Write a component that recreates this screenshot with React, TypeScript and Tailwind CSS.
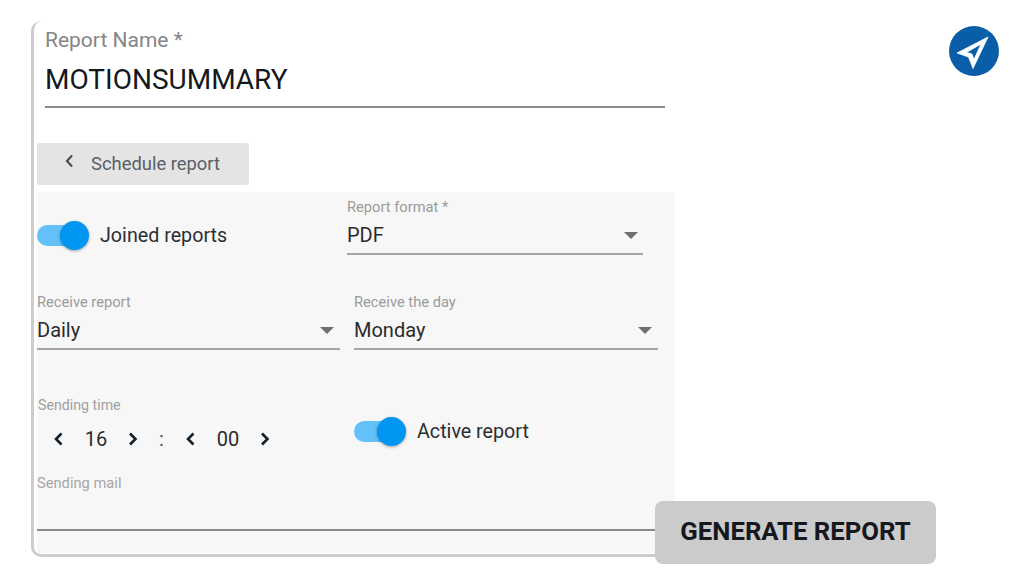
const font = "font-['Roboto',sans-serif]";

function Toggle() {
  return (
    <div className="relative h-[30px] w-[52px] shrink-0">
      <div className="absolute left-0 top-[4px] h-[21px] w-[46px] rounded-full bg-[#63c0f9]" />
      <div className="absolute left-[23px] top-0 h-[29px] w-[29px] rounded-full bg-[#0096f2] shadow-[0_1px_3px_rgba(0,0,0,0.35)]" />
    </div>
  );
}

function Select({ label, value, className, rowClass }: { label: string; value: string; className: string; rowClass: string }) {
  return (
    <div className={className}>
      <div className="text-[14.7px] leading-[17px] text-[#9b9b9b]">{label}</div>
      <div className={`flex h-[39px] items-center justify-between border-b-2 border-[#a6a6a6] ${rowClass}`}>
        <span className="text-[20px] leading-[24px] text-[#2b2b2b]">{value}</span>
        <span className="mt-[1px] h-0 w-0 border-x-[7px] border-t-[7px] border-x-transparent border-t-[#6f6f6f]" />
      </div>
    </div>
  );
}

function Chevron({ dir }: { dir: "left" | "right" }) {
  return (
    <svg width="12" height="16" viewBox="0 0 12 16" fill="none" stroke="#10202c" strokeWidth="2.6" className="shrink-0">
      <path d={dir === "left" ? "M9.5 2.5 4 8l5.5 5.5" : "M3 2.5 8.5 8 3 13.5"} />
    </svg>
  );
}

export default function App() {
  return (
    <div className={`${font} relative flex h-[576px] w-[1024px] items-start overflow-hidden bg-white`}>
      <div className="ml-[31px] mt-[21px] h-[536px] w-[644px] rounded-l-[10px] border-b-[3px] border-l-[3px] border-[#cdcdcd]">
        <div className="ml-[11px] mr-[10px] mt-[5px] border-b-2 border-[#8a8a8a] pb-[9px]">
          <div className="text-[21px] leading-[28px] text-[#868686]">Report Name *</div>
          <div className="mt-[9px] text-[28px] leading-[34px] text-[#15181c]">MOTIONSUMMARY</div>
        </div>
        <button className="ml-[3px] mt-[35px] flex h-[42px] w-[212px] items-center rounded-[2px] bg-[#e4e4e4] text-[#5a6068]">
          <svg width="12" height="16" viewBox="0 0 12 16" fill="none" stroke="#4a5058" strokeWidth="2.2" className="mb-[6px] ml-[26px]">
            <path d="M9 2.5 4 8l5 5.5" />
          </svg>
          <span className="ml-[16px] text-[18.4px] leading-[24px]">Schedule report</span>
        </button>
        <div className="ml-[3px] mt-[7px] h-[361px] bg-[#f7f7f7]">
          <div className="flex">
            <div className="flex w-[310px] items-center pt-[24px]">
              <Toggle />
              <span className="ml-[11px] text-[19.7px] leading-[24px] text-[#2b2f33]">Joined reports</span>
            </div>
            <Select label="Report format *" value="PDF" className="mt-[7px] w-[296px]" rowClass="pr-[5px]" />
          </div>
          <div className="mt-[39px] flex">
            <Select label="Receive report" value="Daily" className="w-[303px]" rowClass="pr-[6px]" />
            <Select label="Receive the day" value="Monday" className="ml-[14px] w-[304px]" rowClass="pr-[6px]" />
          </div>
          <div className="mt-[47px] flex">
            <div className="w-[317px]">
              <div className="pl-[1px] text-[14.2px] leading-[17px] text-[#a0a0a0]">Sending time</div>
              <div className="ml-[15px] mt-[13px] flex h-[24px] items-center text-[20px] text-[#2b2b2b]">
                <Chevron dir="left" />
                <span className="ml-[1px] w-[62px] text-center">16</span>
                <Chevron dir="right" />
                <span className="ml-[20px] w-[6px] text-[#555]">:</span>
                <span className="ml-[19px] flex items-center">
                  <Chevron dir="left" />
                  <span className="ml-[1px] w-[62px] text-center">00</span>
                  <Chevron dir="right" />
                </span>
              </div>
            </div>
            <div className="mt-[20px] flex h-[30px] items-center">
              <Toggle />
              <span className="ml-[11px] text-[19.7px] leading-[24px] text-[#2b2f33]">Active report</span>
            </div>
          </div>
          <div className="mt-[24px] text-[14.7px] leading-[17px] text-[#a6a6a6]">Sending mail</div>
          <div className="mt-[37px] h-[2px] w-[620px] bg-[#8a8a8a]" />
        </div>
      </div>
      <button className="absolute left-[655px] top-[501px] flex h-[63px] w-[281px] items-center justify-center rounded-[8px] bg-[#cbcbcb] pb-[4px] text-[25.7px] font-bold leading-[30px] text-[#15181c]">
        GENERATE REPORT
      </button>
      <div className="ml-[274px] mt-[26px] h-[50px] w-[50px] rounded-full bg-[#0a5ea8]">
        <svg width="50" height="50" viewBox="0 0 50 50" fill="#fff" fillRule="evenodd" stroke="#fff" strokeWidth="0.8" strokeLinejoin="round">
          <path d="M39 11 8 27l11.5 4L24 42.5ZM32 18 17.5 26.5l5.5 1.5 2 5.5Z" />
        </svg>
      </div>
    </div>
  );
}
